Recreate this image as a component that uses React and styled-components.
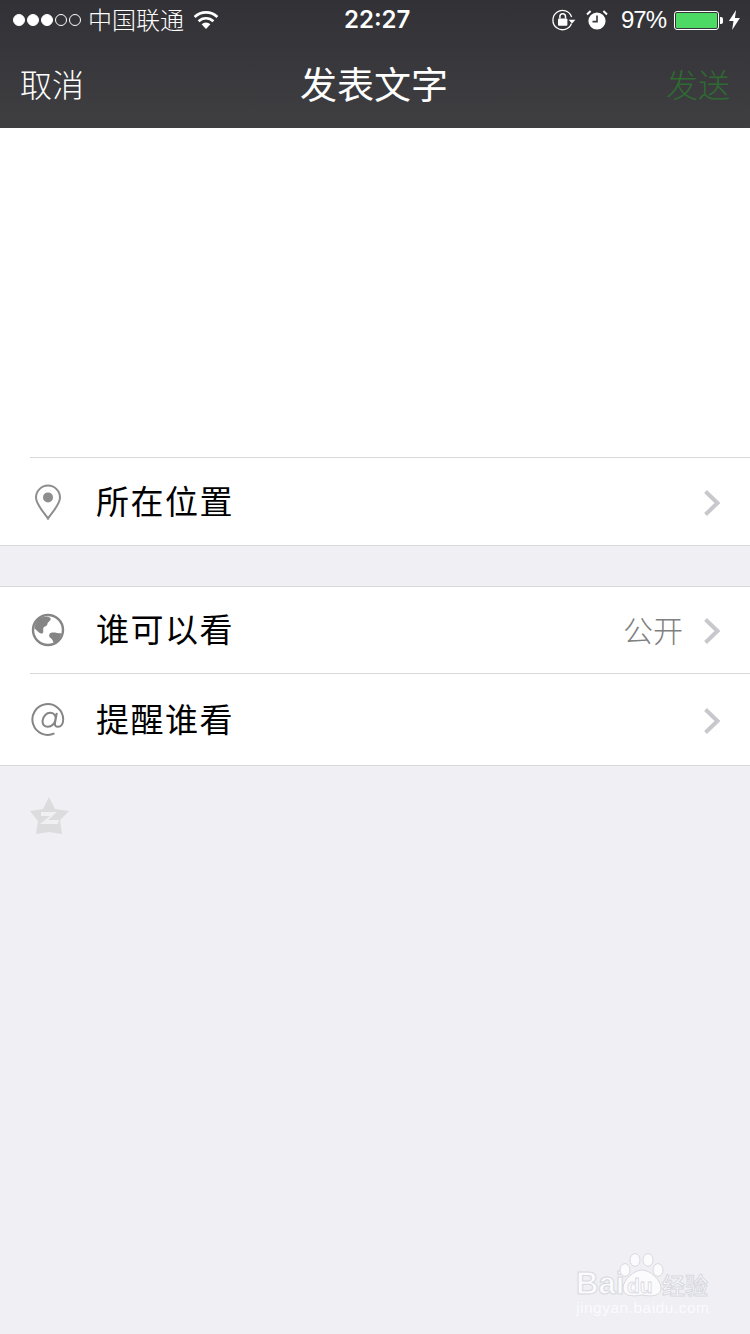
import React from 'react';
import styled, { createGlobalStyle } from 'styled-components';

const CJK = '"Noto Sans CJK SC", "Liberation Sans", sans-serif';

const GlobalStyle = createGlobalStyle`
  html, body {
    margin: 0;
    padding: 0;
    background: #efeff4;
  }
  * {
    box-sizing: border-box;
  }
`;

const Page = styled.div`
  position: relative;
  width: 750px;
  height: 1334px;
  overflow: hidden;
  background: #efeff4;
  font-family: ${CJK};
`;

const Header = styled.header`
  height: 128px;
  background: linear-gradient(180deg, #323136 0%, #3f3f42 100%);
  color: #fff;
`;

const StatusBar = styled.div`
  position: relative;
  height: 40px;
  display: flex;
  align-items: center;
  justify-content: space-between;
  padding: 0 9px 0 13px;
`;

const StatusGroup = styled.div`
  display: flex;
  align-items: center;
`;

const Signal = styled.div`
  display: flex;
  gap: 2px;
  margin-right: 7px;
`;

const SignalDot = styled.span`
  width: 12px;
  height: 12px;
  border-radius: 50%;
  border: 1px solid #fff;
  background: ${(p) => (p.$on ? '#fff' : 'transparent')};
`;

const Carrier = styled.span`
  font-size: 24px;
  line-height: 40px;
  font-weight: 300;
  margin: -2px 9px 0 0;
`;

const Clock = styled.span`
  position: absolute;
  left: 344px;
  top: 0;
  font-family: Inter, "Liberation Sans", sans-serif;
  font-size: 24px;
  line-height: 40px;
  font-weight: 600;
`;

const StatusIcon = styled.span`
  display: flex;
  margin-right: ${(p) => p.$gap}px;
`;

const Percent = styled.span`
  font-family: "Liberation Sans", Arial, sans-serif;
  font-size: 24px;
  line-height: 40px;
  letter-spacing: -1px;
  margin: 0 8px 0 13px;
`;

const Battery = styled.div`
  position: relative;
  width: 45px;
  height: 19px;
  border: 1px solid #fff;
  border-radius: 3px;
  padding: 1px;
  margin-right: 9px;

  &::after {
    content: '';
    position: absolute;
    right: -5px;
    top: 5px;
    width: 3px;
    height: 7px;
    background: #fff;
    border-radius: 0 2px 2px 0;
  }
`;

const BatteryLevel = styled.div`
  height: 100%;
  background: #4cd964;
  border-radius: 1px;
`;

const NavBar = styled.nav`
  position: relative;
  height: 88px;
  display: flex;
  align-items: center;
  justify-content: space-between;
  padding: 0 20px 3px 20px;
`;

const NavAction = styled.span`
  font-size: 32px;
  line-height: 40px;
  font-weight: 300;
  color: ${(p) => (p.$muted ? '#2f6a32' : '#fff')};
`;

const NavTitle = styled.h1`
  position: absolute;
  left: 0;
  right: 2px;
  top: 20px;
  margin: 0;
  text-align: center;
  font-size: 37px;
  line-height: 46px;
  font-weight: 400;
`;

const Composer = styled.div`
  height: 329px;
  background: #fff;
`;

const Group = styled.section`
  background: #fff;
  border-bottom: 1px solid #d9d9dc;
  border-top: ${(p) => (p.$bordered ? '1px solid #d9d9dc' : 'none')};
  margin-top: ${(p) => (p.$gap ? `${p.$gap}px` : '0')};
`;

const Row = styled.div`
  height: ${(p) => p.$height}px;
  display: flex;
  align-items: center;
  padding-right: 29px;
`;

const Rule = styled.div`
  height: 1px;
  margin-left: 30px;
  background: #d9d9dc;
`;

const IconSlot = styled.div`
  width: 96px;
  padding-left: ${(p) => p.$inset}px;
  display: flex;
  align-items: center;
`;

const Label = styled.span`
  flex: 1;
  margin-top: -4px;
  font-size: 33px;
  line-height: 44px;
  letter-spacing: 1.5px;
  color: #000;
`;

const Value = styled.span`
  margin: -2px 20px 0 0;
  font-size: 30px;
  line-height: 40px;
  font-weight: 300;
  color: #808080;
`;

const Chevron = styled.svg`
  width: 18px;
  height: 28px;
  margin-top: 2px;
  display: block;
`;

const ZoneIcon = styled.svg`
  display: block;
  width: 40px;
  height: 38px;
  margin: 31px 0 0 29px;
`;

const Watermark = styled.div`
  position: absolute;
  left: 575px;
  top: 1252px;
  width: 136px;
  height: 68px;
`;

const BaiduText = styled.span`
  position: absolute;
  left: 1px;
  top: 14px;
  font-family: "Liberation Sans", Arial, sans-serif;
  font-size: 31px;
  line-height: 36px;
  font-weight: 700;
  color: #fbfbfd;
  -webkit-text-stroke: 1px #d8d8de;
`;

const PawText = styled.span`
  position: absolute;
  left: 52px;
  top: 22px;
  font-family: "Liberation Sans", Arial, sans-serif;
  font-size: 21px;
  line-height: 24px;
  font-weight: 700;
  color: #fbfbfd;
  -webkit-text-stroke: 0.8px #d8d8de;
`;

const BaiduCn = styled.span`
  position: absolute;
  left: 87px;
  top: 17px;
  font-size: 23px;
  line-height: 30px;
  font-weight: 500;
  color: #fbfbfd;
  -webkit-text-stroke: 1px #d8d8de;
`;

const BaiduUrl = styled.span`
  position: absolute;
  left: 1px;
  top: 46px;
  font-family: "Liberation Sans", Arial, sans-serif;
  font-size: 15.5px;
  line-height: 20px;
  letter-spacing: 0.5px;
  color: #fbfbfd;
`;

const PawIcon = styled.svg`
  position: absolute;
  left: 44px;
  top: 1px;
  width: 46px;
  height: 46px;
`;

const ChevronRight = () => (
  <Chevron viewBox="0 0 18 28">
    <path d="M2.5 2.5 L14.5 14 L2.5 25.5" fill="none" stroke="#c7c7cc" strokeWidth="4" />
  </Chevron>
);

const WifiIcon = () => (
  <svg width="26" height="18" viewBox="0 0 26 18">
    <path d="M13 18 L8.6 13.3 A6.4 6.4 0 0 1 17.4 13.3 Z" fill="#fff" />
    <path d="M5.6 10.2 A10.6 10.6 0 0 1 20.4 10.2" fill="none" stroke="#fff" strokeWidth="2.6" />
    <path d="M1.6 6 A16.4 16.4 0 0 1 24.4 6" fill="none" stroke="#fff" strokeWidth="2.6" />
  </svg>
);

const RotationLockIcon = () => (
  <svg width="24" height="22" viewBox="0 0 24 22">
    <path d="M19.5 14.5 A9.6 9.6 0 1 1 19.6 8" fill="none" stroke="#fff" strokeWidth="1.3" />
    <path d="M16.6 10.8 H23.4 L20 14.4 Z" fill="#fff" />
    <rect x="6" y="9.4" width="9.4" height="7.4" rx="1" fill="#fff" />
    <path d="M7.9 9.6 V7.6 A2.8 2.8 0 0 1 13.5 7.6 V9.6" fill="none" stroke="#fff" strokeWidth="1.5" />
  </svg>
);

const AlarmIcon = () => (
  <svg width="22" height="20" viewBox="0 0 22 20">
    <circle cx="11" cy="11" r="8.6" fill="#fff" />
    <path d="M11 5.5 V11.6 H6.5" fill="none" stroke="#38373b" strokeWidth="1.6" />
    <path d="M1 4.4 L4.6 1 M21 4.4 L17.4 1" stroke="#fff" strokeWidth="2" />
  </svg>
);

const BoltIcon = () => (
  <svg width="13" height="20" viewBox="0 0 12 20">
    <path d="M7.6 0 L0.4 11 H5 L3.6 20 L11.4 8 H6.4 Z" fill="#fff" />
  </svg>
);

const PinIcon = () => (
  <svg width="28" height="36" viewBox="0 0 28 36">
    <path
      d="M14 34.6 C10 28.4 2 20.6 2 13.6 A12 12 0 0 1 26 13.6 C26 20.6 18 28.4 14 34.6 Z"
      fill="none"
      stroke="#8e8e8e"
      strokeWidth="2"
    />
    <circle cx="14" cy="13.4" r="5" fill="#8e8e8e" />
  </svg>
);

const GlobeIcon = () => (
  <svg width="34" height="34" viewBox="0 0 34 34">
    <circle cx="17" cy="17" r="15" fill="#fff" stroke="#858585" strokeWidth="2.4" />
    <path
      d="M10 4.5 C14 3.2 19 3.4 19.6 5.4 C20.2 7.8 16.6 8.6 16.4 11 C16.2 13.6 13.4 12.8 12.4 15 C11.6 17 13.6 20.8 10.4 20.4 C7.4 20 5.6 16.4 3.4 15.4 C3.8 10.6 6.4 6.6 10 4.5 Z"
      fill="#858585"
    />
    <path
      d="M19.6 20 C22.6 18.6 27.4 20.6 30.4 20.2 C29.6 24.6 26.8 28.4 22.8 30.4 C21.8 28 21.6 26 19.6 25 C17.8 24 17.6 21 19.6 20 Z"
      fill="#858585"
    />
  </svg>
);

const AtIcon = () => (
  <svg width="34" height="34" viewBox="0 0 34 34">
    <path
      d="M23.4 30.4 A15.4 15.4 0 1 1 32.2 16.2 C32.2 21 29.8 23.8 27 23.8 C24.8 23.8 23.6 22.4 24 20 L25.8 9.8 M24.6 16 C24 20.4 20.8 23.8 16.8 23.8 C13.2 23.8 11.2 21.2 11.6 17.6 C12.2 13 15.6 9.8 19.2 9.8 C22.8 9.8 25 12.4 24.6 16 Z"
      fill="none"
      stroke="#858585"
      strokeWidth="2"
    />
  </svg>
);

const App = () => (
  <Page>
    <GlobalStyle />
    <Header>
      <StatusBar>
        <StatusGroup>
          <Signal>
            {[true, true, true, false, false].map((on, i) => (
              <SignalDot key={i} $on={on} />
            ))}
          </Signal>
          <Carrier>中国联通</Carrier>
          <WifiIcon />
        </StatusGroup>
        <Clock>22:27</Clock>
        <StatusGroup>
          <StatusIcon $gap={10}>
            <RotationLockIcon />
          </StatusIcon>
          <AlarmIcon />
          <Percent>97%</Percent>
          <Battery>
            <BatteryLevel />
          </Battery>
          <BoltIcon />
        </StatusGroup>
      </StatusBar>
      <NavBar>
        <NavAction>取消</NavAction>
        <NavTitle>发表文字</NavTitle>
        <NavAction $muted>发送</NavAction>
      </NavBar>
    </Header>

    <Composer />

    <Group>
      <Rule />
      <Row $height={87}>
        <IconSlot $inset={34}>
          <PinIcon />
        </IconSlot>
        <Label>所在位置</Label>
        <ChevronRight />
      </Row>
    </Group>

    <Group $bordered $gap={40}>
      <Row $height={86}>
        <IconSlot $inset={31}>
          <GlobeIcon />
        </IconSlot>
        <Label>谁可以看</Label>
        <Value>公开</Value>
        <ChevronRight />
      </Row>
      <Rule />
      <Row $height={91}>
        <IconSlot $inset={31}>
          <AtIcon />
        </IconSlot>
        <Label>提醒谁看</Label>
        <ChevronRight />
      </Row>
    </Group>

    <ZoneIcon viewBox="0 0 40 38">
      <path
        d="M20 0 L26 12 L40 14 L31 23 L33 37 L20 35 L7 37 L9 24 L1 14 L14 12 Z"
        fill="#dcdcde"
      />
      <path d="M12 15 H28 L19 23 H30 L29 27 H11 L21 19 H12 Z" fill="#efeff4" />
    </ZoneIcon>

    <Watermark>
      <BaiduText>Bai</BaiduText>
      <PawIcon viewBox="0 0 46 46">
        <g fill="#fbfbfd" stroke="#d8d8de" strokeWidth="1">
          <ellipse cx="6" cy="17" rx="5" ry="6.4" />
          <ellipse cx="16" cy="7" rx="5" ry="6.4" />
          <ellipse cx="29" cy="7" rx="5" ry="6.4" />
          <ellipse cx="39" cy="17" rx="5" ry="6.4" />
          <path d="M23 17 C31 17 42 27 42 35 C42 43 33 44 23 42 C13 44 4 43 4 35 C4 27 15 17 23 17 Z" />
        </g>
      </PawIcon>
      <PawText>du</PawText>
      <BaiduCn>经验</BaiduCn>
      <BaiduUrl>jingyan.baidu.com</BaiduUrl>
    </Watermark>
  </Page>
);

export default App;
